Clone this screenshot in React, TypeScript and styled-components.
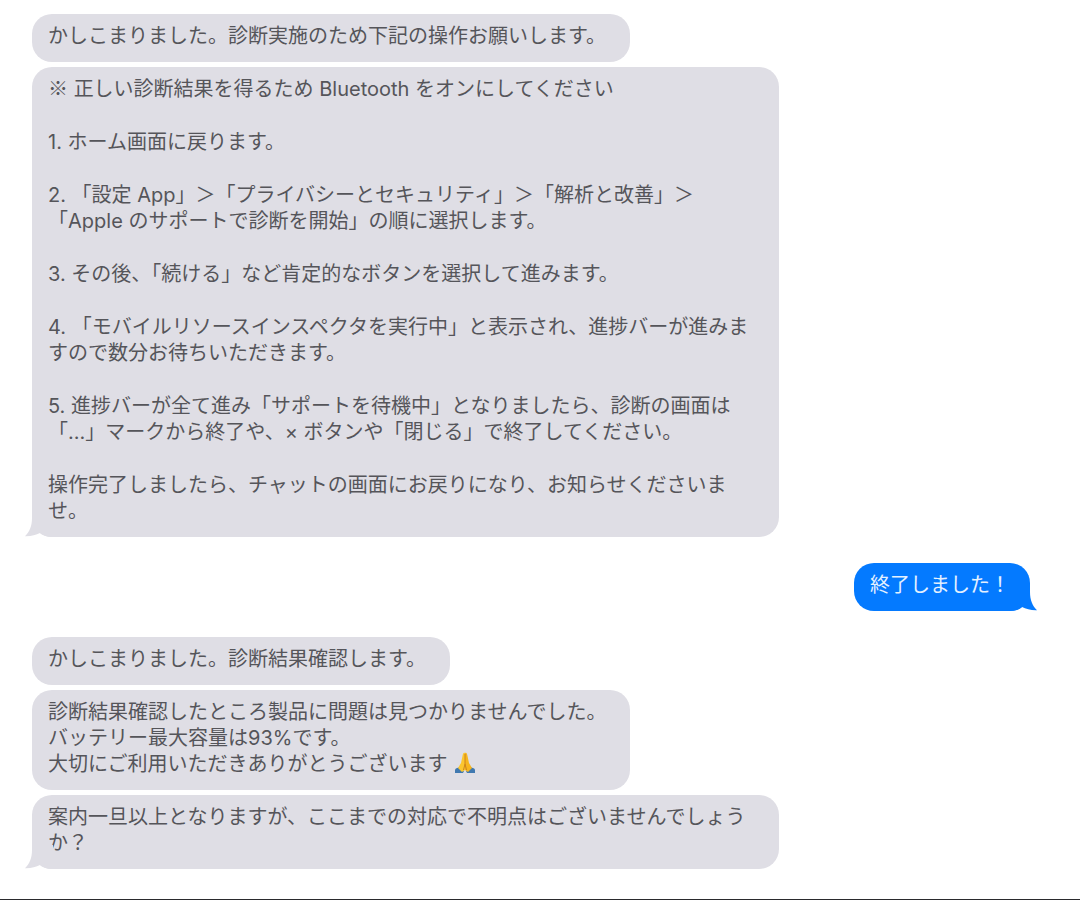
import React from "react";
import styled, { createGlobalStyle } from "styled-components";

const GlobalStyle = createGlobalStyle`
  * { box-sizing: border-box; }
  body { margin: 0; background: #ffffff; }
`;

const Page = styled.main`
  display: flex;
  flex-direction: column;
  min-height: 100vh;
  border-bottom: 1px solid #2a2a2d;
  font-family: Inter, "Noto Sans CJK JP", sans-serif;
  font-size: 20px;
  line-height: 26px;
`;

const Thread = styled.div`
  display: flex;
  flex-direction: column;
  gap: 26px;
  padding: 14px 50px 28px 32px;
`;

const Group = styled.section<{ $sent?: boolean }>`
  display: flex;
  flex-direction: column;
  align-items: ${(p) => (p.$sent ? "flex-end" : "flex-start")};
  gap: 5px;
`;

const Bubble = styled.article<{ $sent?: boolean; $wide?: boolean }>`
  position: relative;
  display: flex;
  flex-direction: column;
  gap: 27px;
  width: ${(p) => (p.$wide ? "100%" : "fit-content")};
  max-width: 747px;
  padding: 9px ${(p) => (p.$sent ? "20px" : "24px")} 13px 16px;
  border-radius: 20px;
  background: ${(p) => (p.$sent ? "#047aff" : "#dfdee5")};
  color: ${(p) => (p.$sent ? "#e4f1ff" : "#55555a")};
`;

const Text = styled.p`
  margin: 0;
`;

const Mark = styled.span`
  font-family: "Noto Sans CJK JP", sans-serif;
  line-height: 1;
`;

const TailShape = styled.svg<{ $sent?: boolean }>`
  position: absolute;
  bottom: 0;
  ${(p) => (p.$sent ? "right: -7px; transform: scaleX(-1);" : "left: -7px;")}
`;

const Emoji = styled.svg`
  margin-left: 6px;
  vertical-align: -3px;
`;

function Tail({ sent }: { sent?: boolean }) {
  return (
    <TailShape $sent={sent} width="28" height="24" viewBox="0 0 28 24" aria-hidden="true">
      <path
        d="M7 0V5C7 13 4.500 19 0 23.2C6 23.400 11 22 15 20C18 22.800 22 24 28 24V0Z"
        fill={sent ? "#047aff" : "#dfdee5"}
      />
    </TailShape>
  );
}

function FoldedHands() {
  return (
    <Emoji width="22" height="22" viewBox="0 0 22 22" role="img" aria-label="🙏">
      <path d="M1 17.500C2 16 4 15.500 6 15L10 19L9 21H1Z" fill="#4179b0" />
      <path d="M21 17.500C20 16 18 15.500 16 15L12 19L13 21H21Z" fill="#4179b0" />
      <path d="M11 1C9.500 0 8.800 2 8.500 4L7 11L4 16L8 20L11 18Z" fill="#fbc62f" />
      <path d="M11 1C12.500 0 13.200 2 13.500 4L15 11L18 16L14 20L11 18Z" fill="#f6b51f" />
      <path d="M11 2V12M11 12L9.500 18M11 12L12.500 18" stroke="#c67d1b" strokeWidth="0.900" fill="none" />
    </Emoji>
  );
}

export default function App() {
  return (
    <>
      <GlobalStyle />
      <Page lang="ja">
        <Thread>
          <Group>
            <Bubble>
              <Text>かしこまりました。診断実施のため下記の操作お願いします。</Text>
            </Bubble>
            <Bubble $wide>
              <Tail />
              <Text>
                <Mark>※</Mark> 正しい診断結果を得るため Bluetooth をオンにしてください
              </Text>
              <Text>1. ホーム画面に戻ります。</Text>
              <Text>
                2. 「設定 App」＞「プライバシーとセキュリティ」＞「解析と改善」＞
                <br />
                「Apple のサポートで診断を開始」の順に選択します。
              </Text>
              <Text>3. その後、「続ける」など肯定的なボタンを選択して進みます。</Text>
              <Text>
                4. 「モバイルリソースインスペクタを実行中」と表示され、進捗バーが進みま
                <br />
                すので数分お待ちいただきます。
              </Text>
              <Text>
                5. 進捗バーが全て進み「サポートを待機中」となりましたら、診断の画面は
                <br />
                「...」マークから終了や、× ボタンや「閉じる」で終了してください。
              </Text>
              <Text>
                操作完了しましたら、チャットの画面にお戻りになり、お知らせくださいま
                <br />
                せ。
              </Text>
            </Bubble>
          </Group>
          <Group $sent>
            <Bubble $sent>
              <Tail sent />
              <Text>終了しました！</Text>
            </Bubble>
          </Group>
          <Group>
            <Bubble>
              <Text>かしこまりました。診断結果確認します。</Text>
            </Bubble>
            <Bubble>
              <Text>
                診断結果確認したところ製品に問題は見つかりませんでした。
                <br />
                バッテリー最大容量は93%です。
                <br />
                大切にご利用いただきありがとうございます
                <FoldedHands />
              </Text>
            </Bubble>
            <Bubble $wide>
              <Tail />
              <Text>
                案内一旦以上となりますが、ここまでの対応で不明点はございませんでしょう
                <br />
                か？
              </Text>
            </Bubble>
          </Group>
        </Thread>
      </Page>
    </>
  );
}
